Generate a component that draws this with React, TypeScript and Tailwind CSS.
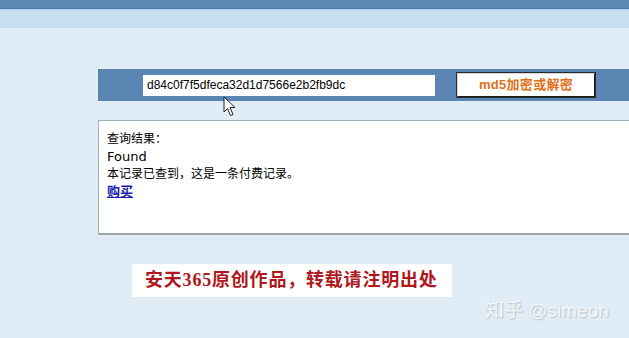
const cjk = '"Liberation Sans", "Noto Sans CJK SC", sans-serif';

function Cursor() {
  return (
    <svg
      className="absolute left-[223px] top-[96px]"
      width="14"
      height="22"
      viewBox="0 0 14 22"
    >
      <path
        d="M1 1 L1 16 L4.5 12.5 L7.5 19.5 L10 18.5 L7 11.5 L12 11.5 Z"
        fill="#fff"
        stroke="#222"
        strokeWidth="1"
        strokeLinejoin="round"
      />
    </svg>
  );
}

export default function App() {
  return (
    <div
      className="relative w-[629px] h-[338px] overflow-hidden bg-[#e0edf7]"
      style={{ fontFamily: cjk }}
    >
      <div className="h-[9px] bg-[#5a87b4] border-b border-[#4d789f]" />
      <div className="h-[19px] bg-[#c8dff0] border-t-2 border-[#b6d6ef]" />

      <div className="pl-[98px] pt-[41px]">
        <div className="h-[32px] bg-[#5b86b3] flex items-center pl-[45px]">
          <div className="w-[292px] h-[21px] bg-white flex items-center pl-[4px] text-[12px] text-black">
            d84c0f7f5dfeca32d1d7566e2b2fb9dc
          </div>
          <button className="ml-[22px] w-[138px] h-[24px] bg-white border border-t-[#d8d8d8] border-l-[#d8d8d8] border-r-[#1a1a1a] border-b-[#1a1a1a] outline outline-1 outline-[#2a2a2a] flex items-center justify-center text-[13px] font-bold text-[#e0701a] tracking-[0.3px]">
            md5加密或解密
          </button>
        </div>

        <div className="mt-[19px] h-[115px] bg-white border border-[#9fb0bd] border-r-0 border-b-2 border-b-[#9aa4ab] pl-[8px] pt-[9px] text-black">
          <div className="text-[12px] leading-[18px]">查询结果：</div>
          <div className="text-[13px] leading-[18px]" style={{ fontFamily: '"DejaVu Sans", sans-serif' }}>
            Found
          </div>
          <div className="text-[12px] leading-[17px]">本记录已查到，这是一条付费记录。</div>
          <a href="#" className="block text-[13px] leading-[17px] font-bold text-[#1a1aa8] underline">
            购买
          </a>
        </div>
      </div>

      <div className="ml-[132px] mt-[29px] w-[320px] h-[33px] bg-white flex items-center pl-[13px]">
        <span
          className="text-[18px] font-bold text-[#b01820] tracking-[0.8px]"
          style={{ fontFamily: '"Liberation Serif", "Noto Sans CJK SC", serif' }}
        >
          安天365原创作品，转载请注明出处
        </span>
      </div>

      <div
        className="absolute left-[485px] top-[297px] text-[19px] text-[#f2f6f9]"
        style={{ textShadow: '1px 1px 1px rgba(140,150,160,0.5)' }}
      >
        知乎 @simeon
      </div>

      <Cursor />
    </div>
  );
}
